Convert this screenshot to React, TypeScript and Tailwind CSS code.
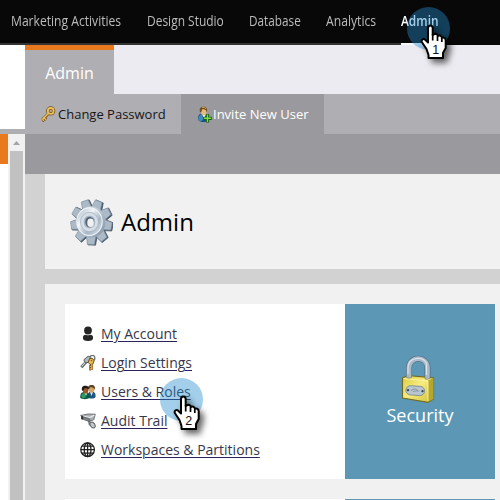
import React from "react";

type NavItem = { label: string; box: string; scale: string; active?: boolean };

const navItems: NavItem[] = [
  { label: "Marketing Activities", box: "w-[136px]", scale: "scale-x-[0.865]" },
  { label: "Design Studio", box: "w-[102px]", scale: "scale-x-[0.855]" },
  { label: "Database", box: "w-[77px]", scale: "scale-x-[0.84]" },
  { label: "Analytics", box: "w-[75px]", scale: "scale-x-[0.87]" },
  { label: "Admin", box: "w-[38px]", scale: "scale-x-[0.85]", active: true },
];

function Gear() {
  const teeth = Array.from({ length: 9 }, (_, i) => i * 40 + 22);
  return (
    <svg className="h-[48px] w-[44px] shrink-0" viewBox="0 0 44 48">
      <defs>
        <linearGradient id="gear" x1="0" y1="0" x2="1" y2="1">
          <stop offset="0" stopColor="#dfe7ee" />
          <stop offset=".5" stopColor="#b4c1ce" />
          <stop offset="1" stopColor="#7f90a2" />
        </linearGradient>
        <linearGradient id="gearFace" x1="0" y1="0" x2="1" y2="1">
          <stop offset="0" stopColor="#9fb0c0" />
          <stop offset=".35" stopColor="#f1f5f8" />
          <stop offset=".65" stopColor="#a9b7c5" />
          <stop offset="1" stopColor="#dce5ec" />
        </linearGradient>
      </defs>
      <g transform="translate(22.300 24) scale(.92 1)">
        {teeth.map((a) => (
          <path key={a} d="M-6-12L-4.400-22.500H3.800L5.600-12Z" transform={`translate(1 .5) rotate(${a})`} fill="#4b5b6c" stroke="#4b5b6c" strokeWidth=".9" />
        ))}
        {teeth.map((a) => (
          <path key={a} d="M-5.600-12L-4.100-22.300H3.400L5.200-12Z" transform={`rotate(${a})`} fill="#acbac8" stroke="#8797a8" strokeWidth=".6" />
        ))}
        <circle r="15.500" fill="url(#gear)" />
        <circle cx="-2" cy="-.3" r="13.800" fill="url(#gearFace)" stroke="#f0f4f7" strokeWidth="1.100" />
        <circle cx="-2" cy="0" r="9.800" fill="#d4dde5" stroke="#9dacba" strokeWidth=".7" />
        <circle cx="-2" cy="0" r="7" fill="#a9b7c5" stroke="#e6ecf1" strokeWidth=".8" />
        <ellipse cx="-1.800" cy="0" rx="4.800" ry="5.300" fill="#536375" />
        <ellipse cx="-.8" cy=".7" rx="3.600" ry="4.300" fill="#f1f1f1" />
      </g>
    </svg>
  );
}

function GoldKey() {
  return (
    <svg className="size-4 shrink-0" viewBox="0 0 16 16" fill="none">
      <path d="M8.500 7.500L2.300 13.700M4.400 12l1.800 1.800M2.500 13.600l1.800 1.500" stroke="#704717" strokeWidth="2.800" />
      <circle cx="10.700" cy="4.900" r="2.900" stroke="#75501c" strokeWidth="3.400" />
      <circle cx="10.700" cy="4.900" r="2.900" stroke="#eac35a" strokeWidth="1.800" />
      <path d="M8.500 7.300L2.400 13.400M4.200 12l1.800 1.800M2.500 13.500l1.300 1.200" stroke="#ecc15a" strokeWidth="1.500" />
    </svg>
  );
}

function InviteIcon() {
  return (
    <svg className="h-[17px] w-4 shrink-0" viewBox="0 0 16 17">
      <path d="M1 13c-.5-4 2-5.500 4-5.500 4 0 7 2 6.500 6-.5 3-9.500 4-10.500-.5Z" fill="#1d4f80" />
      <path d="M1.600 11c1-2.500 3-2.500 3-2.500l2 5-3 2C1 14 .8 13 1.600 11Z" fill="#3e8bb9" />
      <path d="M5 8l2 5 2-5Z" fill="#eef5fb" />
      <ellipse cx="6.600" cy="5.300" rx="3" ry="4" fill="#e3ba83" />
      <path d="M3 6C2 2 4 .7 6.500.7 9.500.7 11 3 9.700 6.500 9.400 4 8 3 5 3.400 4.700 6 4 7 3 6Z" fill="#735220" />
      <path d="M5 1.500q3-.7 4 1.300" stroke="#c69b4e" fill="none" />
      <path d="M10.500 8v8.500M6.200 12.300h8.600" stroke="#145d16" strokeWidth="3.300" />
      <path d="M10.500 8.600v7.300M6.900 12.300h7.200" stroke="#7cdd49" strokeWidth="1.400" />
    </svg>
  );
}

function AccountIcon() {
  return (
    <svg className="size-4 shrink-0" viewBox="0 0 16 16" fill="#252525">
      <circle cx="8" cy="4.500" r="3.900" />
      <path d="M2.900 12q0-3.300 3-3.300 2.200 1 4.300 0 2.900 0 2.900 3.300 0 3-5.100 3T2.900 12Z" />
    </svg>
  );
}

function KeysIcon() {
  return (
    <svg className="size-4 shrink-0" viewBox="0 0 16 16" fill="none">
      <circle cx="12.300" cy="3" r="2.600" stroke="#69716d" strokeWidth="1.200" />
      <path d="M7 6L1.300 12.300" stroke="#555f61" strokeWidth="2.800" />
      <path d="M7 5.500L1.700 11.500" stroke="#dce3e5" strokeWidth="1.100" />
      <path d="M3.800 4.800L8 1.200l3 1-2.500 5-3.200.5Z" fill="#aeb8bc" stroke="#586366" />
      <path d="M9.600 3.600h3l1.500 2.200-1.200 3.200-2.600.7-2-2.200Z" fill="#f0c450" stroke="#6e4820" />
      <path d="M11.600 8.800v6M11 11.500H9M11 14.300H9.300" stroke="#704619" strokeWidth="2.600" />
      <path d="M11.800 8.500v5.700M11 11.500H9.500M11.400 13.800h-1.600" stroke="#eeb942" strokeWidth="1.200" />
      <circle cx="11.500" cy="5.800" r=".8" fill="#805421" />
    </svg>
  );
}

function UsersIcon() {
  return (
    <svg className="size-4 shrink-0" viewBox="0 0 16 16">
      <path d="M7.500 13.500c0-4 1-6 3.500-6 3.500 0 5 2 4.500 5.500-1 2-6 2-8 .5Z" fill="#1d5686" />
      <path d="M10 8l1.500 4L13 8Z" fill="#d6e7f3" />
      <ellipse cx="11.500" cy="5" rx="2.900" ry="3.700" fill="#d5a565" />
      <path d="M8 5c-.4-3 1.500-4 3.500-4 3 0 4.200 2 3.100 5-.5-2-2-3-4.600-2.600L9 5Z" fill="#5b4220" />
      <path d="M.3 14c-.2-4 1-6 4-6 4 0 6 2 5.300 5.500-1.500 2-7 2.200-9.300.5Z" fill="#0e5641" />
      <path d="M1 12q1-3 3-3.500l2 5-3 1Z" fill="#2c9b68" />
      <path d="M4.500 9l1.500 3 1.300-3Z" fill="#d2ecf4" />
      <ellipse cx="5.600" cy="6.300" rx="2.700" ry="3.400" fill="#9a5829" />
      <path d="M2 6.500C1.200 3 3 1.700 5.300 1.700c3 0 4 2 3.200 4C7.600 4.400 6 4 4.500 4.200 4 6 3 7.300 2 6.500Z" fill="#211a19" />
    </svg>
  );
}

function CameraIcon() {
  return (
    <svg className="size-4 shrink-0" viewBox="0 0 16 16" strokeLinejoin="round">
      <path d="M8.500 7l1 4.500 3-1" fill="none" stroke="#7a7d80" strokeWidth="1.600" />
      <ellipse cx="12.600" cy="12" rx="2.200" ry="3.200" transform="rotate(-35 12.600 12)" fill="#c4c7c9" stroke="#55585b" />
      <path d="M.6 2.500L8 1l7.300.2-1.500 5.500-4.100 1.500Z" fill="#aeb1b4" stroke="#65686a" strokeWidth=".9" />
      <path d="M3 3l6.500 1.500 4.800-2.300" fill="none" stroke="#eeeff0" strokeWidth="1.200" />
      <path d="M1.200 3.200L9.800 6v2.800L2.500 6Z" fill="#85898d" stroke="#515558" strokeWidth=".8" />
      <ellipse cx="2.200" cy="4.900" rx="1.200" ry="1.800" fill="#303336" />
    </svg>
  );
}

function GlobeIcon() {
  return (
    <svg className="size-4 shrink-0" viewBox="0 0 16 16" fill="none" stroke="#202020" strokeWidth="1.250">
      <circle cx="7.600" cy="7.700" r="6.800" />
      <ellipse cx="7.600" cy="7.700" rx="3.400" ry="6.800" />
      <path d="M7.600 1v13.500M.8 7.700h13.600M1.900 4.200h11.500M1.900 11.200h11.500" />
    </svg>
  );
}

function Padlock() {
  return (
    <svg className="mr-[5px] h-[48px] w-[34px]" viewBox="0 0 34 48">
      <defs>
        <linearGradient id="brass" x1="0" y1="0" x2="1" y2="1">
          <stop offset="0" stopColor="#d8cb3d" />
          <stop offset=".45" stopColor="#f6ec80" />
          <stop offset="1" stopColor="#d0bf36" />
        </linearGradient>
      </defs>
      <path d="M8 24V13C8 .5 26.500.5 26.500 13v13" fill="none" stroke="#526b80" strokeWidth="6" />
      <path d="M8 24V13C8 .5 26.500.5 26.500 13v13" fill="none" stroke="#a9b9c8" strokeWidth="4.700" />
      <path d="M7 22V13C7 2 21 .7 25.500 8V24" fill="none" stroke="#d9e3eb" strokeWidth="1.200" />
      <path d="M1.500 23l5-2.500 26 2.300v21L27 47.300 1.500 43Z" fill="url(#brass)" stroke="#746a25" strokeWidth="1.200" />
      <path d="M27 25.500l5.500-2.500v21L27 47Z" fill="#b5a62c" />
      <path d="M2.500 23.500L27 26V46" fill="none" stroke="#fff4a5" strokeWidth=".9" />
      <path d="M5.500 19v3.500q2.500 1.300 5 0V19M24 20v4q2.500 1 5-.8V20" fill="#a9b9c8" stroke="#6d7c73" strokeWidth=".6" />
      <g transform="rotate(4 14 36)">
        <rect x="4.800" y="31" width="18.800" height="9.200" rx="4.600" fill="#bac6cf" stroke="#75818a" strokeWidth=".8" />
        <path d="M10 36q4-4 7 0m-5 1q3-2 6-1" fill="none" stroke="#8996a1" />
        <circle cx="7" cy="35.600" r="1.200" fill="#384858" />
        <circle cx="21.500" cy="35.600" r="1.200" fill="#384858" />
      </g>
    </svg>
  );
}

function ClickMarker({ step, place }: { step: string; place: string }) {
  return (
    <div className={`absolute size-[43px] ${place}`}>
      <div className="size-[43px] rounded-full bg-[#238dd0]/42" />
      <svg className="absolute left-[12px] top-[16px] h-[50px] w-[44px] overflow-visible" viewBox="0 0 44 50">
        <path
          d="M9.500 35V32L7.500 26L2.800 19C2 16.500 4.500 15 6.500 17L9 19.500V5Q9 2.500 11.300 2.500Q13.700 2.500 13.700 5V12Q15.500 10.500 17.200 11Q18.700 11.300 19 13Q21.200 11.500 23 14.500Q26.500 14 26.700 17.500V25L24 30V35Z"
          fill="#fff"
          stroke="#000"
          strokeWidth="2"
          strokeLinejoin="round"
          className="drop-shadow-[4px_4px_3px_rgba(0,0,0,0.6)]"
        />
        <path d="M13.700 11v6.500M18.500 13v5M22.800 15v4" stroke="#000" strokeWidth="1.700" />
        <text x="16.800" y="31" textAnchor="middle" className="font-['Liberation_Sans',sans-serif] text-[12.500px]" fill="#111">
          {step}
        </text>
      </svg>
    </div>
  );
}

const links = [
  { label: "My Account", Icon: AccountIcon },
  { label: "Login Settings", Icon: KeysIcon },
  { label: "Users & Roles", Icon: UsersIcon },
  { label: "Audit Trail", Icon: CameraIcon },
  { label: "Workspaces & Partitions", Icon: GlobeIcon },
];

export default function App() {
  return (
    <div className="relative flex h-[500px] w-[500px] flex-col overflow-hidden bg-white font-['Open_Sans',sans-serif]">
      <nav className="flex h-[45px] shrink-0 bg-[#080808]">
        <div className="w-[11px] border-b-2 border-[#333]" />
        {navItems.map(({ label, box, scale, active }) => (
          <div key={label} className={`flex h-[45px] shrink-0 border-b-2 whitespace-nowrap pt-[11px] text-[14px] leading-5 ${box} ${active ? "border-[#f7f7f9] font-semibold text-white" : "border-[#333] font-medium text-[#bcbcbc]"}`}>
            <span className={`inline-block origin-left ${scale}`}>{label}</span>
          </div>
        ))}
      </nav>

      <div className="flex min-h-0 flex-1">
        <aside className="flex w-[25px] shrink-0 flex-col">
          <div className="h-[84px] shrink-0 bg-white" />
          <div className="h-[5px] shrink-0 bg-[#afaeb3]" />
          <div className="flex flex-1">
            <div className="w-2">
              <div className="h-[30px] bg-[#e8791c]" />
            </div>
            <div className="flex w-[17px] flex-col items-center bg-[#f1f1f1] px-[2px]">
              <svg className="h-[17px] w-[13px] shrink-0" viewBox="0 0 13 17">
                <path d="M3 11L6.500 7L10 11Z" fill="#a3a3a3" />
              </svg>
              <div className="w-[13px] flex-1 bg-[#c1c1c1]" />
            </div>
          </div>
        </aside>

        <div className="flex flex-1 flex-col">
          <header className="flex h-[49px] shrink-0 bg-[#ecebf1]">
            <div className="w-[89px] border-t-5 border-[#e8791c] bg-[#afaeb3] pt-[11px] text-center text-[16px] leading-6 text-white">Admin</div>
          </header>
          <div className="flex h-10 shrink-0 bg-[#afaeb3] text-[13px] leading-5">
            <div className="flex w-[156px] items-center whitespace-nowrap pl-[15px] text-[#171717]">
              <GoldKey />
              <span className="ml-[2px]">Change Password</span>
            </div>
            <div className="flex w-[143px] items-center whitespace-nowrap bg-[#9a999e] pl-[16px] text-white">
              <InviteIcon />
              <span>Invite New User</span>
            </div>
          </div>
          <div className="h-10 shrink-0 bg-[#9a999e]" />

          <main className="flex flex-1 flex-col gap-[15px] bg-[#d2d2d2] pl-5">
            <section className="flex h-[95px] shrink-0 items-center gap-2 bg-[#f1f1f1] pl-[24px]">
              <Gear />
              <h1 className="text-[24px] leading-8 text-black">Admin</h1>
            </section>
            <section className="flex-1 bg-[#f1f1f1] pt-5 pl-5">
              <div className="flex h-[175px] w-[430px]">
                <ul className="w-[280px] bg-white pt-[15px] pl-[15px] text-[14px] text-[#37374b]">
                  {links.map(({ label, Icon }) => (
                    <li key={label} className="flex h-[29px] items-center gap-[5px]">
                      <Icon />
                      <span className="whitespace-nowrap underline decoration-[#29235c] decoration-1 underline-offset-2">{label}</span>
                    </li>
                  ))}
                </ul>
                <div className="flex w-[150px] flex-col items-center bg-[#5c98b5] pt-[51px] text-[18px] leading-6 text-white">
                  <Padlock />
                  <span>Security</span>
                </div>
              </div>
              <div className="mt-5 flex h-px w-[430px]">
                <div className="w-[280px] bg-white" />
                <div className="w-[150px] bg-[#5c98b5]" />
              </div>
            </section>
          </main>
        </div>
      </div>

      <ClickMarker step="1" place="left-[407px] top-[7px]" />
      <ClickMarker step="2" place="left-[160px] top-[378px]" />
    </div>
  );
}
